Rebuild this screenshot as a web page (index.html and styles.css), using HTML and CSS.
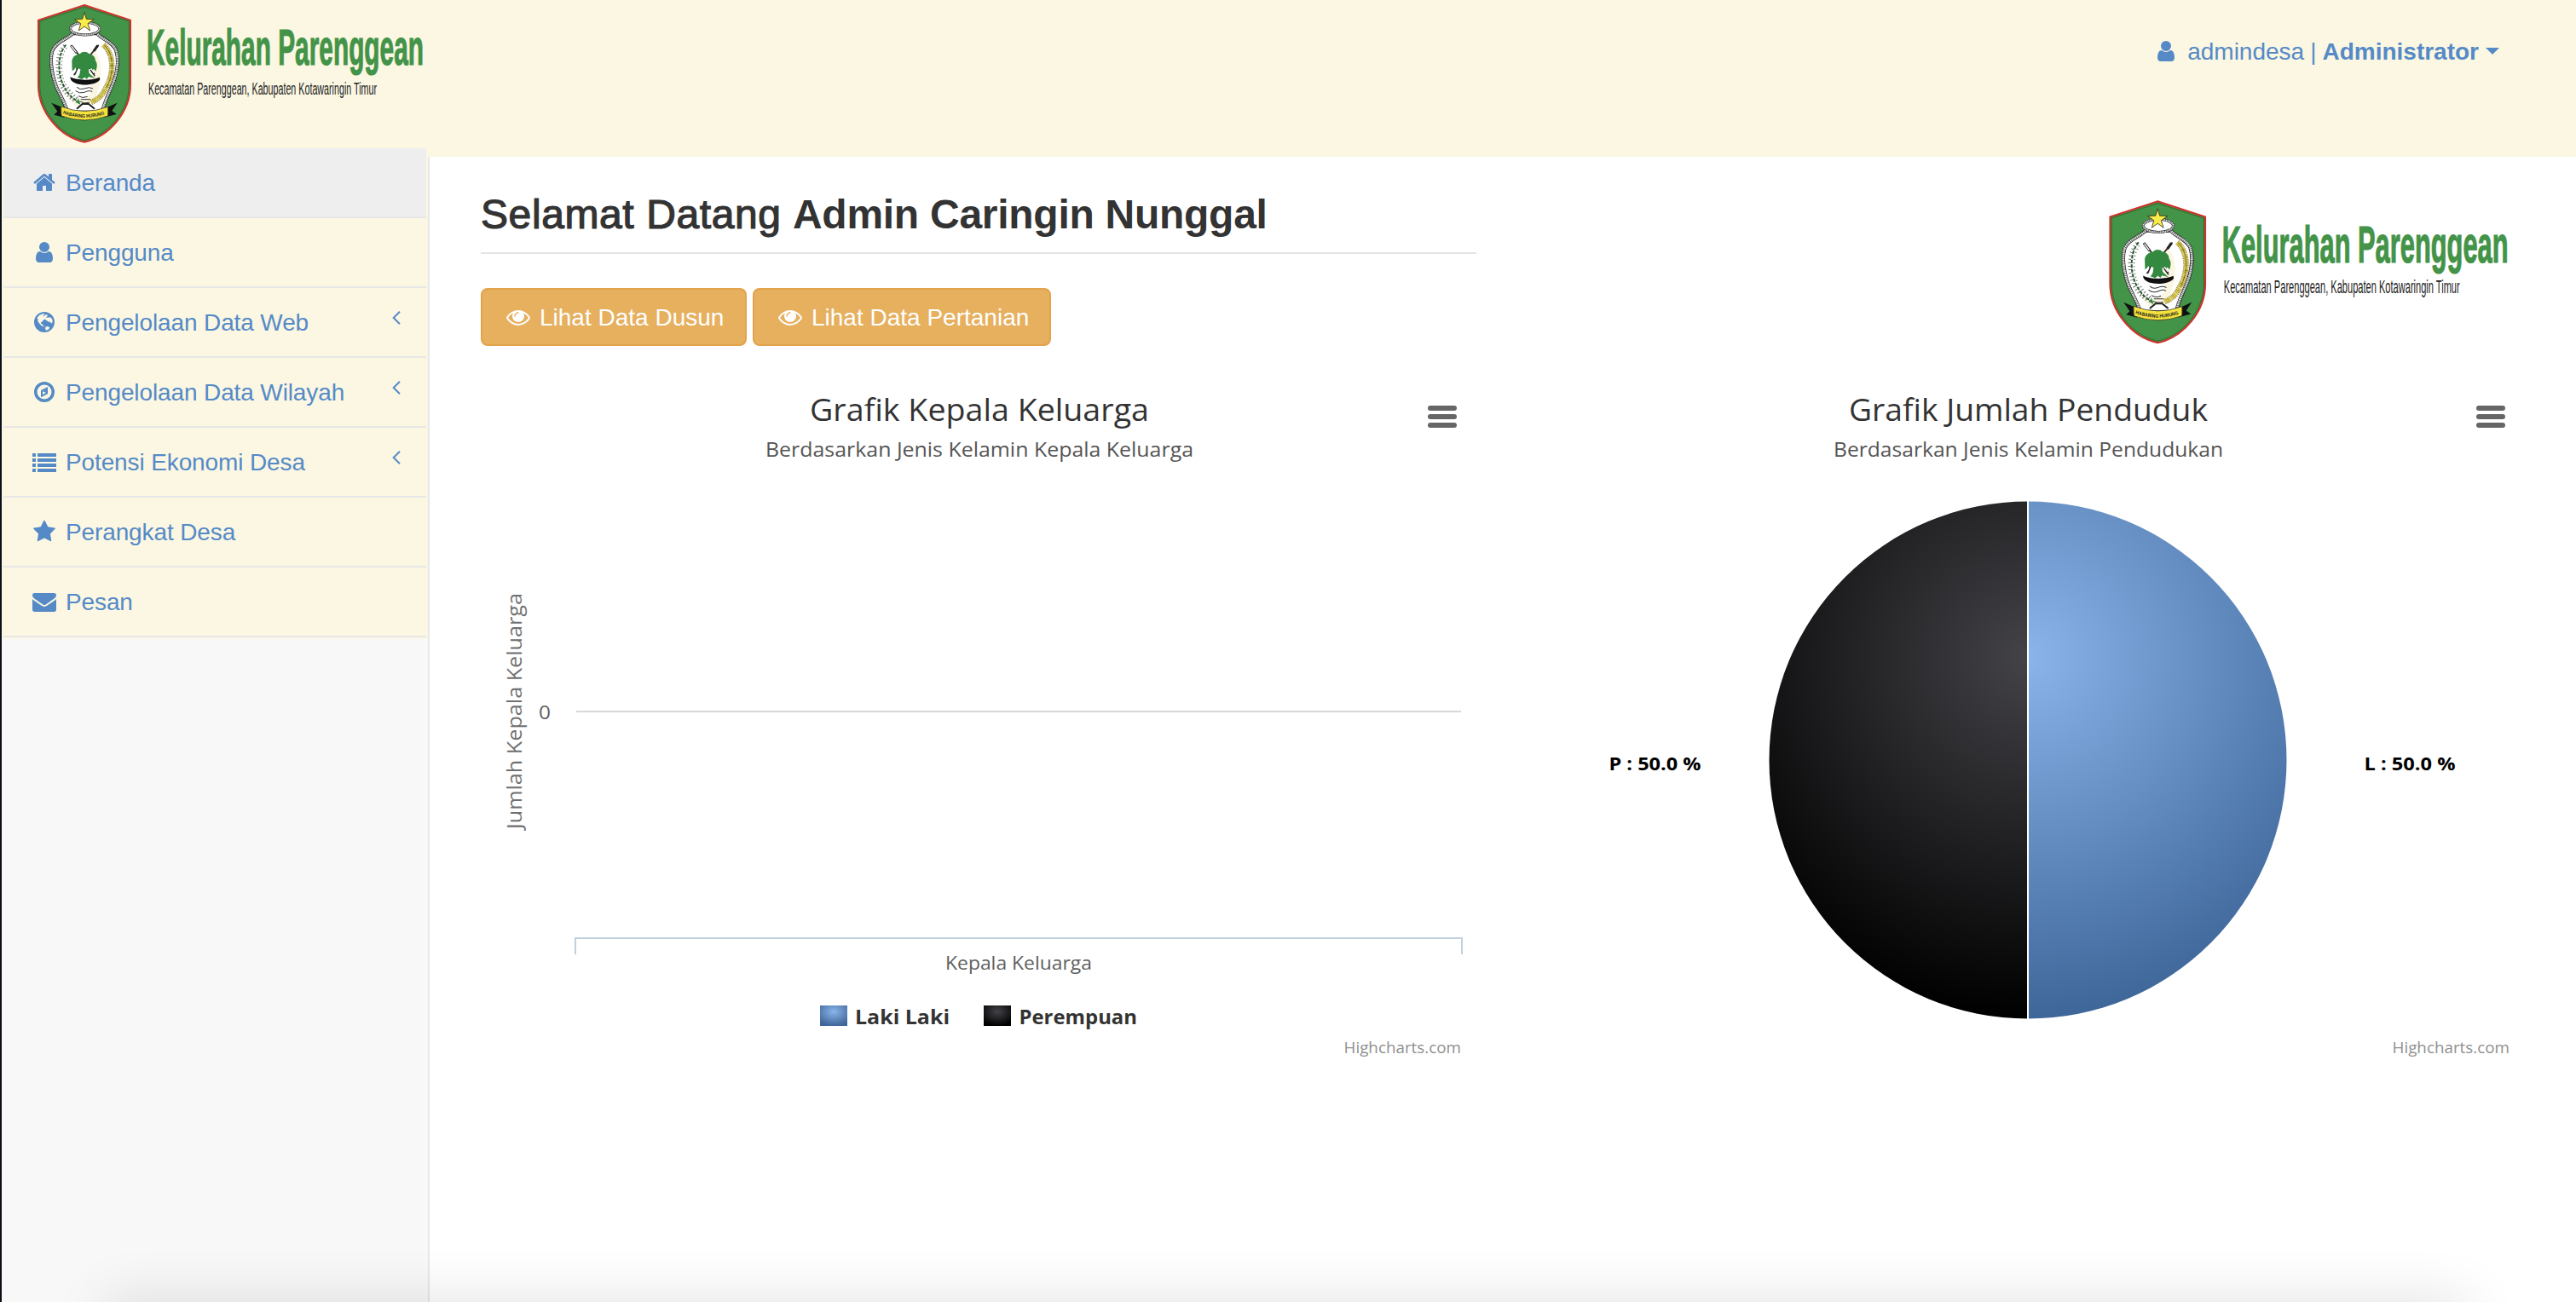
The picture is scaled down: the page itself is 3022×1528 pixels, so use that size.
FILE: index.html
```html
<!DOCTYPE html>
<html lang="id">
<head>
<meta charset="utf-8">
<title>Kelurahan Parenggean</title>
<link rel="stylesheet" href="styles.css">
</head>
<body>
<svg class="defs" width="0" height="0" aria-hidden="true">
  <defs>
    <radialGradient id="blue" cx=".5" cy=".3" r=".7"><stop offset="0" stop-color="#8ab4ea"/><stop offset="1" stop-color="#3e6699"/></radialGradient>
    <radialGradient id="black" cx=".5" cy=".3" r=".7"><stop offset="0" stop-color="#434348"/><stop offset="1" stop-color="#000"/></radialGradient>
    <radialGradient id="pieBlue" gradientUnits="userSpaceOnUse" cx="583" cy="325" r="424"><stop offset="0" stop-color="#8ab4ea"/><stop offset="1" stop-color="#3e6699"/></radialGradient>
    <radialGradient id="pieBlack" gradientUnits="userSpaceOnUse" cx="583" cy="325" r="424"><stop offset="0" stop-color="#434348"/><stop offset="1" stop-color="#000"/></radialGradient>
  </defs>
  <symbol id="user" viewBox="0 0 1792 1792"><path d="M1536 1399q0 109-62.500 187t-150.500 78h-854q-88 0-150.500-78t-62.500-187q0-85 8.500-160.500t31.500-152 58.500-131 94-89 134.500-34.500q131 128 313 128t313-128q76 0 134.500 34.500t94 89 58.500 131 31.500 152 8.500 160.500zm-256-887q0 159-112.500 271.500t-271.500 112.500-271.500-112.500-112.500-271.500 112.500-271.500 271.500-112.500 271.500 112.500 112.500 271.500z"/></symbol>
  <symbol id="home" viewBox="0 0 1792 1792"><path d="M1472 992v480q0 26-19 45t-45 19h-384v-384h-256v384h-384q-26 0-45-19t-19-45v-480q0-1 .5-3t.5-3l575-474 575 474q1 2 1 6zm223-69l-62 74q-8 9-21 11h-3q-13 0-21-7l-692-577-692 577q-12 8-24 7-13-2-21-11l-62-74q-8-10-7-23.500t11-21.500l719-599q32-26 76-26t76 26l244 204v-195q0-14 9-23t23-9h192q14 0 23 9t9 23v408l219 182q10 8 11 21.500t-7 23.500z"/></symbol>
  <symbol id="globe" viewBox="0 0 28 28"><path fill-rule="evenodd" d="M14 2a12 12 0 1 0 0 24a12 12 0 1 0 0-24zM12 4.200L14.500 4L14 5L12.600 6.400L13.400 7.200L15.500 5.200L17.500 5.400L18.200 7L16.600 7.600L16.400 9L18.500 8.400L21.500 8.600L23.600 11.500L23.400 14.600L22 15.600L20.600 13.600L18.600 13.800L17.600 12.400L16.200 12L15 10.400L13 11.600L11.400 13.800L9.800 14.400L10.200 16L11.800 16.200L12.200 18L13.800 18.600L13.400 19.400L10.600 18.200L8.400 15.800L6.400 13.200L6.400 10L5.200 9.400L8 6z"/><path fill="#fbf7e3" d="M15.500 19.400L18 19L20.400 20.400L19 22.600L16.400 23.800L15 22z"/></symbol>
  <symbol id="compass" viewBox="0 0 28 28"><path fill-rule="evenodd" d="M14 2a12 12 0 1 0 0 24a12 12 0 1 0 0-24zM14 5.500a8.500 8.500 0 1 1 0 17a8.500 8.500 0 1 1 0-17zM18 8v8.200L10 20.200V12zM16 11.200L12 13.200V17L16 15z"/><path d="M12 13.200L16 11.200V15z"/></symbol>
  <symbol id="list" viewBox="0 0 28 28"><path d="M0 4h4v4H0zM6 4h22v4H6zM0 10h4v4H0zM6 10h22v4H6zM0 16h4v4H0zM6 16h22v4H6zM0 22h4v4H0zM6 22h22v4H6z"/></symbol>
  <symbol id="star" viewBox="0 0 1792 1792"><path d="M1728 647q0 22-26 48l-363 354 86 500q1 7 1 20 0 21-10.500 35.500t-30.500 14.500q-19 0-40-12l-449-236-449 236q-22 12-40 12-21 0-31.500-14.500t-10.500-35.500q0-6 2-20l86-500-364-354q-25-27-25-48 0-37 56-46l502-73 225-455q19-41 49-41t49 41l225 455 502 73q56 9 56 46z"/></symbol>
  <symbol id="mail" viewBox="0 0 1792 1792"><path d="M1792 710v794q0 66-47 113t-113 47h-1472q-66 0-113-47t-47-113v-794q44 49 101 87 362 246 497 345 57 42 92.500 65.500t94.500 48 110 24.500h2q51 0 110-24.500t94.500-48 92.500-65.500q170-123 498-345 57-39 100-87zm0-294q0 79-49 151t-122 123q-376 261-468 325-10 7-42.500 31t-54 38.500-52 32.500-57.500 27-50 9h-2q-23 0-50-9t-57.500-27-52-32.500-54-38.500-42.500-31q-91-64-262-182.500t-205-142.500q-62-42-117-115.500t-55-136.500q0-78 41.500-130t118.500-52h1472q65 0 112.500 47t47.500 113z"/></symbol>
  <symbol id="eye" viewBox="0 0 1792 1792"><path d="M1664 960q-152-236-381-353 61 104 61 225 0 185-131.500 316.500t-316.500 131.500-316.500-131.500-131.500-316.500q0-121 61-225-229 117-381 353 133 205 333.500 326.500t434.500 121.500 434.500-121.500 333.500-326.500zm-720-384q0-20-14-34t-34-14q-125 0-214.500 89.500t-89.500 214.500q0 20 14 34t34 14 34-14 14-34q0-86 61-147t147-61q20 0 34-14t14-34zm848 384q0 34-20 69-140 230-376.500 368.500t-499.500 138.500-499.500-139-376.500-368q-20-35-20-69t20-69q140-229 376.500-368t499.500-139 499.500 139 376.500 368q20 35 20 69z"/></symbol>
  <symbol id="logo" viewBox="2 0 508 172" overflow="visible">
    <g transform="scale(.33333)">
      <path d="M297 18L459 71V300C459 390 388 480 297 500C206 480 135 390 135 300V71Z" fill="#439348" stroke="#d0312b" stroke-width="6"/>
      <path d="M297 25L454 75V300C454 386 386 474 297 494C208 474 140 386 140 300V75Z" fill="none" stroke="#2c5a2c" stroke-width="2"/>
      <path d="M256 118C236 138 196 148 184 180C174 215 184 275 204 318C220 350 232 372 238 395H360C366 360 386 325 402 282C416 240 416 200 408 176C396 148 356 136 342 118Z" fill="#fff" stroke="#222" stroke-width="12"/>
      <path d="M256 118C236 138 196 148 184 180C174 215 184 275 204 318C220 350 232 372 238 395H360C366 360 386 325 402 282C416 240 416 200 408 176C396 148 356 136 342 118" fill="none" stroke="#ddd" stroke-width="8" stroke-dasharray="5 1.500"/>
      <ellipse cx="299" cy="101" rx="51" ry="22" fill="#fff" stroke="#222" stroke-width="9"/>
      <ellipse cx="299" cy="101" rx="51" ry="22" fill="none" stroke="#ddd" stroke-width="6" stroke-dasharray="4 1.500"/>
      <path d="M297 43L304 67L331 68L309 83L317 108L297 93L277 108L284 83L263 68L290 67Z" fill="#f8ec48" stroke="#3a3420" stroke-width="2.500"/>
      <path d="M318 172C365 190 365 270 340 335L318 362L265 375L230 330C280 365 300 350 318 330Z" fill="#fbf6e1"/>
      <path d="M250 160L333 262M347 158L260 264" stroke="#222" stroke-width="5"/><path d="M250 160L270 186M344 160L330 180" stroke="#222" stroke-width="9"/><path d="M251 162L268 184" stroke="#fff" stroke-width="4"/>
      <path d="M253 214C256 198 268 192 282 189C290 180 306 181 312 189C326 191 336 200 336 214C344 224 342 238 337 251L330 242L326 248L320 240C312 238 310 250 316 260L334 276L312 270L306 278L298 272L288 279L272 273C284 264 284 246 276 240L270 248L266 238L260 246L254 250Z" fill="#33893f"/>
      <path d="M280 243L268 260M318 243L328 260" stroke="#fff" stroke-width="10"/><path d="M318 246L334 268M273 240L264 262" stroke="#222" stroke-width="4"/>
      <path d="M247 271C270 284 326 284 350 272L352 280C338 304 262 306 249 280Z" fill="#111"/>
      <path d="M270 307Q282 318 297 312Q315 304 327 312M266 320Q280 331 297 325Q315 316 325 323M276 338Q290 348 308 340M284 350H318" fill="none" stroke="#333" stroke-width="3"/>
      <path d="M232 158C202 190 202 260 224 302C238 330 252 346 280 360" fill="none" stroke="#245b2d" stroke-width="6" stroke-dasharray="12 4"/>
      <path d="M226 160C194 190 194 260 216 306C230 332 248 350 270 358M236 170C214 200 212 260 236 304C246 324 258 332 276 350" fill="none" stroke="#666" stroke-width="9" stroke-dasharray="3 9"/>
      <path d="M223 163C192 195 191 260 213 308M240 168C218 198 214 260 240 306" fill="none" stroke="#fff" stroke-width="6" stroke-dasharray="7 5"/>
      <path d="M364 158C402 190 402 260 372 310C362 332 348 350 320 360" fill="none" stroke="#7b6c1f" stroke-width="19" stroke-dasharray="3 3"/>
      <path d="M364 158C402 190 402 260 372 310C362 332 348 350 320 360" fill="none" stroke="#d6c33e" stroke-width="14" stroke-dasharray="6 2"/>
      <path d="M368 160C402 192 402 260 374 310" fill="none" stroke="#4f4618" stroke-width="2"/>
      <path d="M270 383L290 366H312L333 383" fill="none" stroke="#222" stroke-width="6"/><path d="M276 345L283 368L270 362Z" fill="#33893f"/><path d="M282 358Q298 366 316 360" stroke="#444" stroke-width="3" fill="none"/>
      <path d="M181 362L214 376V400L228 414L190 404L202 392Z" fill="#111"/><path d="M413 362L381 376V400L364 414L410 402L394 390Z" fill="#111"/>
      <path d="M215 375Q297 407 380 376V408Q297 438 216 408Z" fill="#f5e23c" stroke="#222" stroke-width="2"/>
      <path id="ribbonLine" d="M221 400Q297 428 375 400" fill="none"/>
      <text class="motto"><textPath href="#ribbonLine" textLength="150" lengthAdjust="spacingAndGlyphs">HABARING HURUNG</textPath></text>
    </g>
    <text class="logo-title" x="172" y="75.500" textLength="325" lengthAdjust="spacingAndGlyphs">Kelurahan Parenggean</text>
    <text class="logo-sub" x="174" y="110.500" textLength="268" lengthAdjust="spacingAndGlyphs">Kecamatan Parenggean, Kabupaten Kotawaringin Timur</text>
  </symbol>
</svg>

<header class="topbar">
  <svg class="brand"><use href="#logo"/></svg>
  <div class="account">
    <svg class="icon"><use href="#user"/></svg>
    <span class="login">admindesa</span><span class="bar">|</span><b>Administrator</b>
    <i class="caret"></i>
  </div>
</header>

<div class="page">
  <nav class="sidebar">
    <ul class="menu">
      <li class="active"><svg class="icon"><use href="#home"/></svg><span>Beranda</span></li>
      <li><svg class="icon"><use href="#user"/></svg><span>Pengguna</span></li>
      <li><svg class="icon"><use href="#globe"/></svg><span>Pengelolaan Data Web</span><svg class="arrow" viewBox="0 0 10 16"><path d="M9 .8L1.700 8L9 15.200"/></svg></li>
      <li><svg class="icon"><use href="#compass"/></svg><span>Pengelolaan Data Wilayah</span><svg class="arrow" viewBox="0 0 10 16"><path d="M9 .8L1.700 8L9 15.200"/></svg></li>
      <li><svg class="icon"><use href="#list"/></svg><span>Potensi Ekonomi Desa</span><svg class="arrow" viewBox="0 0 10 16"><path d="M9 .8L1.700 8L9 15.200"/></svg></li>
      <li><svg class="icon"><use href="#star"/></svg><span>Perangkat Desa</span></li>
      <li><svg class="icon"><use href="#mail"/></svg><span>Pesan</span></li>
    </ul>
  </nav>

  <main class="content">
    <section class="column">
      <div class="intro">
        <h1><span class="greet">Selamat Datang</span> <b>Admin Caringin Nunggal</b></h1>
        <div class="buttons">
          <a class="btn dusun"><svg class="icon"><use href="#eye"/></svg><span>Lihat Data Dusun</span></a>
          <a class="btn tani"><svg class="icon"><use href="#eye"/></svg><span>Lihat Data Pertanian</span></a>
        </div>
      </div>
      <svg class="chart" viewBox="0 0 1168 800">
        <text class="title" x="386" y="48" textLength="398" lengthAdjust="spacingAndGlyphs">Grafik Kepala Keluarga</text>
        <text class="subtitle" x="334" y="90" textLength="502" lengthAdjust="spacingAndGlyphs">Berdasarkan Jenis Kelamin Kepala Keluarga</text>
        <g class="burger"><rect x="1111" y="30" width="34" height="6" rx="3"/><rect x="1111" y="40" width="34" height="6" rx="3"/><rect x="1111" y="50" width="34" height="6" rx="3"/></g>
        <path class="grid" d="M112 389H1150"/>
        <path class="axis" d="M111 674V655H1151V674"/>
        <text class="ytitle" transform="translate(48 527) rotate(-90)" textLength="277" lengthAdjust="spacingAndGlyphs">Jumlah Kepala Keluarga</text>
        <text class="label" x="68" y="398" textLength="14" lengthAdjust="spacingAndGlyphs">0</text>
        <text class="label" x="545" y="692" textLength="172" lengthAdjust="spacingAndGlyphs">Kepala Keluarga</text>
        <rect x="398" y="734" width="32" height="24" fill="url(#blue)"/>
        <text class="legend" x="439" y="756" textLength="111" lengthAdjust="spacingAndGlyphs">Laki Laki</text>
        <rect x="590" y="734" width="32" height="24" fill="url(#black)"/>
        <text class="legend" x="631.500" y="756" textLength="138.500" lengthAdjust="spacingAndGlyphs">Perempuan</text>
        <text class="credit" x="1012.500" y="790" textLength="137.500" lengthAdjust="spacingAndGlyphs">Highcharts.com</text>
      </svg>
    </section>
    <section class="column">
      <div class="intro right"><svg class="brand-large"><use href="#logo"/></svg></div>
      <svg class="chart" viewBox="0 0 1168 800">
        <text class="title" x="373" y="48" textLength="421" lengthAdjust="spacingAndGlyphs">Grafik Jumlah Penduduk</text>
        <text class="subtitle" x="355" y="90" textLength="457" lengthAdjust="spacingAndGlyphs">Berdasarkan Jenis Kelamin Pendudukan</text>
        <g class="burger"><rect x="1109" y="30" width="34" height="6" rx="3"/><rect x="1109" y="40" width="34" height="6" rx="3"/><rect x="1109" y="50" width="34" height="6" rx="3"/></g>
        <path d="M583 142.500A303.500 303.500 0 0 1 583 749.500Z" fill="url(#pieBlue)"/>
        <path d="M583 142.500A303.500 303.500 0 0 0 583 749.500Z" fill="url(#pieBlack)"/>
        <path d="M583 142V750" stroke="#fff" stroke-width="2"/>
        <text class="slice" x="91.500" y="458" textLength="108" lengthAdjust="spacingAndGlyphs">P : 50.0 %</text>
        <text class="slice" x="977.500" y="458" textLength="107" lengthAdjust="spacingAndGlyphs">L : 50.0 %</text>
        <text class="credit" x="1010.500" y="790" textLength="137.500" lengthAdjust="spacingAndGlyphs">Highcharts.com</text>
      </svg>
    </section>
  </main>
</div>
<div class="dock-shadow"></div>
</body>
</html>
```

FILE: styles.css
```css
* { box-sizing: border-box; }

body {
  position: relative;
  display: flex;
  flex-direction: column;
  height: 1528px;
  margin: 0;
  overflow: hidden;
  border-left: 2px solid #0c0e18;
  background: #fff;
  color: #333;
  font: 28px/40px "Liberation Sans", Arial, sans-serif;
}

.defs { position: absolute; }
.icon { flex: none; width: 28px; height: 28px; fill: currentColor; }

/* Header */
.topbar {
  display: flex;
  flex: none;
  justify-content: space-between;
  height: 184px;
  background: #fbf7e3;
}
.brand { width: 508px; height: 172px; overflow: visible; }
.account {
  display: flex;
  align-items: center;
  height: 40px;
  margin: 41px 90px 0 0;
  color: #558ac7;
}
.account .icon { margin-top: -2px; }
.login { margin-left: 11px; }
.bar { margin: 0 7px 0 7px; }
.caret {
  margin: -2px 0 0 8px;
  border: 8px solid transparent;
  border-top-color: currentColor;
  border-bottom: 0;
}

.logo-title {
  fill: #439348;
  stroke: #439348;
  stroke-width: 1.2px;
  font: bold 60px "Liberation Sans", Arial, sans-serif;
}
.logo-sub { fill: #222; font: 20.5px "Liberation Sans", Arial, sans-serif; }
.motto { fill: #222; font: bold 17px "Liberation Sans", Arial, sans-serif; }

/* Navigation */
.page { display: flex; flex: 1; }
.sidebar {
  width: 502px;
  border-right: 2px solid #e7e7e7;
  background: #f8f8f8;
}
.menu {
  position: relative;
  width: 500px;
  margin: -10px 0 0;
  padding: 0 2px 2px;
  background: #fbf7e3;
  list-style: none;
}
.menu li {
  display: flex;
  align-items: center;
  height: 82px;
  padding: 0 30px 0 34px;
  border-bottom: 2px solid #e7e7e7;
  color: #558ac7;
}
.menu .active { background: #eee; }
.menu span { margin-left: 11px; padding-top: 2px; letter-spacing: -.12px; }
.arrow {
  width: 10px;
  height: 16px;
  margin: -10px 0 0 auto;
  fill: none;
  stroke: currentColor;
  stroke-width: 2;
}

/* Content */
.content {
  display: grid;
  grid-template-columns: 1168px 1168px;
  gap: 64px;
  padding-left: 60px;
}
.intro { height: 262px; }
.right { display: flex; justify-content: flex-end; padding: 46px 8px 0 0; }
.brand-large { width: 525px; height: 178px; overflow: visible; }
h1 {
  height: 114px;
  margin: 0;
  padding-top: 41px;
  border-bottom: 2px solid #e4e4e4;
  font-size: 48px;
  font-weight: 400;
  line-height: 54px;
  white-space: nowrap;
}
.greet { letter-spacing: .6px; -webkit-text-stroke: 1.2px #333; }
h1 b { letter-spacing: -.27px; }
.buttons { display: flex; gap: 7px; padding-top: 40px; }
.btn {
  display: flex;
  align-items: center;
  gap: 11px;
  height: 68px;
  padding: 0 0 0 28px;
  border: 2px solid #e2a34c;
  border-radius: 8px;
  background: #e6b05f;
  color: #fff;
  white-space: nowrap;
}
.btn span { padding-top: 2px; }
.dusun { width: 312px; }
.tani { width: 350px; }

/* Charts */
.chart {
  display: block;
  width: 1168px;
  height: 800px;
  font-family: "Open Sans", "Noto Sans", sans-serif;
}
.title { fill: #333; font-size: 36px; }
.subtitle { fill: #555; font-size: 24px; }
.ytitle { fill: #707070; font-size: 24px; font-weight: 500; }
.label { fill: #606060; font-size: 22px; }
.legend { fill: #333; font-size: 24px; font-weight: 700; }
.slice { fill: #000; font-size: 22px; font-weight: 700; }
.credit { fill: #909090; font-size: 18px; }
.burger { fill: #666; }
.grid { stroke: #d8d8d8; stroke-width: 2; }
.axis { fill: none; stroke: #c0d0e0; stroke-width: 2; }

/* Soft shade over the bottom edge of the window */
.dock-shadow {
  position: absolute;
  right: 128px;
  bottom: -40px;
  left: 122px;
  height: 40px;
  box-shadow: 0 0 64px rgba(0, 0, 0, .15);
}
```
